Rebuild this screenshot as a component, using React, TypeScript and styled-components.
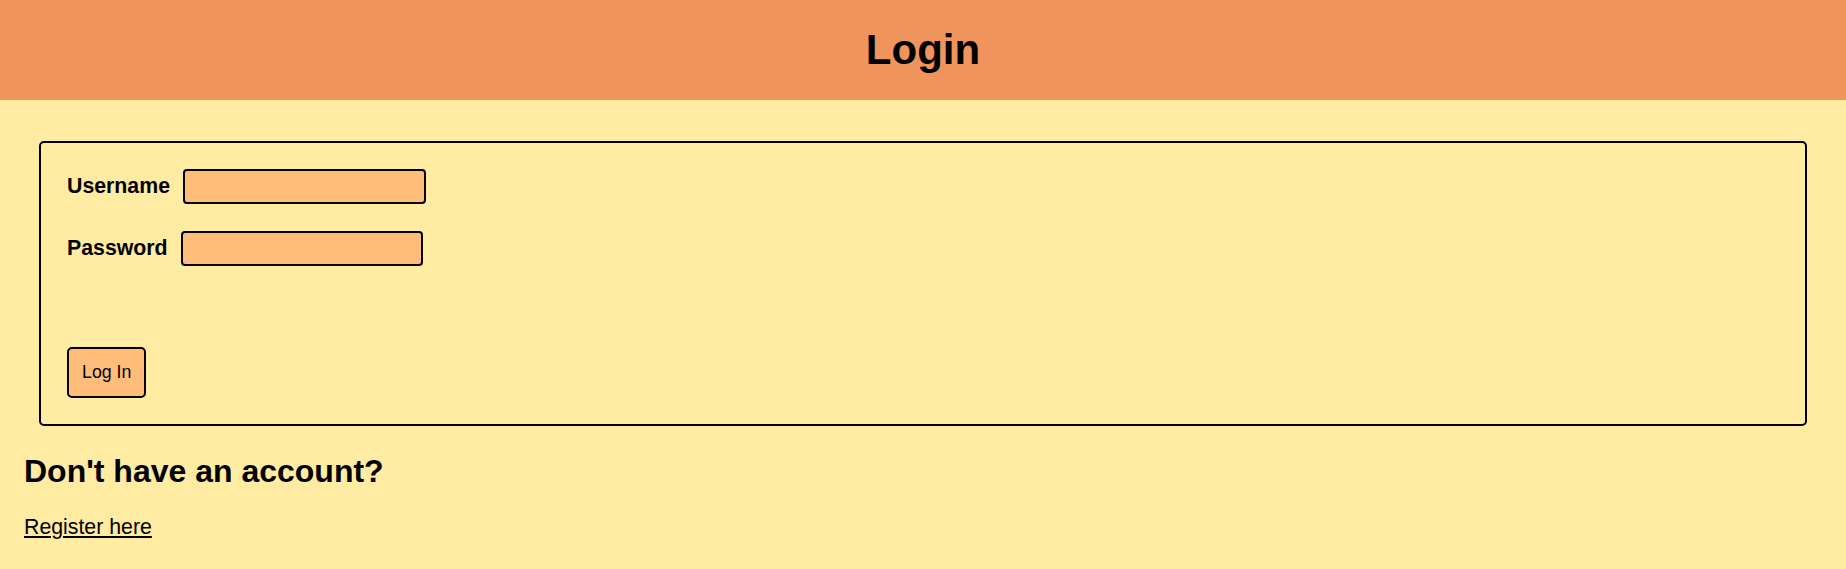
import styled, { createGlobalStyle } from 'styled-components';

const GlobalStyle = createGlobalStyle`
  body {
    margin: 0;
    background: #ffeba1;
    font-family: 'Liberation Sans', Arial, sans-serif;
    color: #000;
  }
`;

export default function App() {
  return (
    <>
      <GlobalStyle />
      <StyleHeader>
        <StyleTitle>Login</StyleTitle>
      </StyleHeader>
      <StyleMain>
        <StyleForm onSubmit={(e) => e.preventDefault()}>
          <StyleField>
            <StyleLabel htmlFor="username">Username</StyleLabel>
            <StyleInput id="username" type="text" $width={243} />
          </StyleField>
          <StyleField>
            <StyleLabel htmlFor="password">Password</StyleLabel>
            <StyleInput id="password" type="password" $width={242} />
          </StyleField>
          <StyleButton type="submit">Log In</StyleButton>
        </StyleForm>
        <StyleSubtitle>Don't have an account?</StyleSubtitle>
        <StyleLinkRow>
          <StyleLink href="#register">Register here</StyleLink>
        </StyleLinkRow>
      </StyleMain>
    </>
  );
}

const StyleHeader = styled.header`
  height: 100px;
  background: #ef945c;
  display: flex;
  align-items: center;
  justify-content: center;
`;

const StyleTitle = styled.h1`
  margin: 0;
  font-size: 42px;
  font-weight: bold;
`;

const StyleMain = styled.main`
  padding: 0 24px;
`;

const StyleForm = styled.form`
  margin: 41px 15px 0;
  padding: 26px;
  border: 2px solid #000;
  border-radius: 5px;
  display: flex;
  flex-direction: column;
  align-items: flex-start;
`;

const StyleField = styled.div`
  display: flex;
  align-items: center;
  gap: 13px;
  margin-bottom: 27px;

  & + & {
    margin-bottom: 81px;
  }
`;

const StyleLabel = styled.label`
  font-size: 21.3px;
  font-weight: bold;
`;

const StyleInput = styled.input<{ $width: number }>`
  box-sizing: border-box;
  width: ${(p) => p.$width}px;
  height: 35px;
  margin: 0;
  border: 2px solid #000;
  border-radius: 4px;
  background: #ffbd79;
  font-size: 17px;
`;

const StyleButton = styled.button`
  box-sizing: border-box;
  height: 51px;
  padding: 0 13px;
  border: 2px solid #000;
  border-radius: 5px;
  background: #ffbd79;
  font-family: 'Liberation Sans', Arial, sans-serif;
  font-size: 17.8px;
  color: #000;
  cursor: pointer;
`;

const StyleSubtitle = styled.h2`
  margin: 27px 0 0;
  font-size: 32px;
  font-weight: bold;
`;

const StyleLinkRow = styled.p`
  margin: 25px 0 0;
  font-size: 21.3px;
`;

const StyleLink = styled.a`
  color: #000;
  text-decoration: underline;
`;
